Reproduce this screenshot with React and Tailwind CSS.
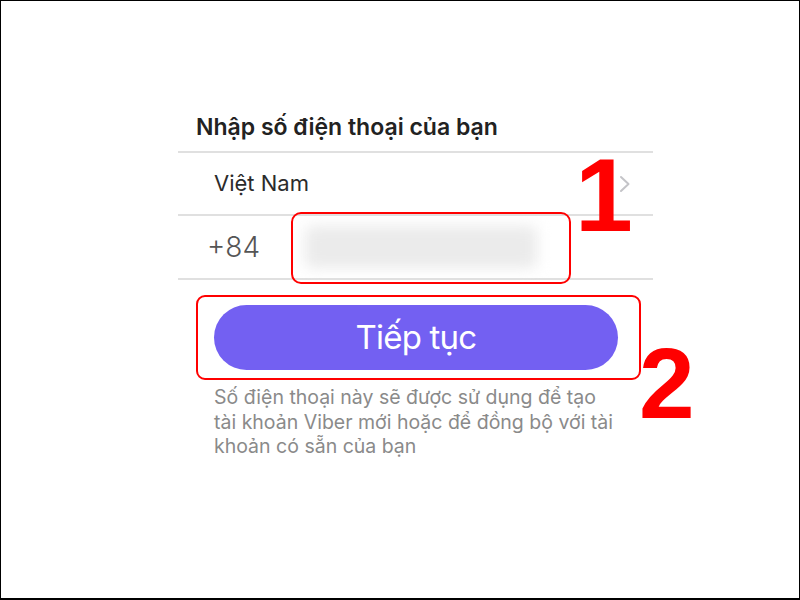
import React from 'react';

function Chevron() {
  return (
    <svg width="12" height="18" viewBox="0 0 12 18" fill="none">
      <path d="M2 2 L9.5 9 L2 16" stroke="#c4c4c8" strokeWidth="2" strokeLinecap="round" strokeLinejoin="round" />
    </svg>
  );
}

export default function App() {
  return (
    <div className="w-[800px] h-[600px] bg-white border border-black border-b-2 overflow-hidden" style={{ fontFamily: 'Inter, "Noto Sans", sans-serif' }}>
      <div className="relative ml-[177px] w-[475px] pt-[114px]">
        <div className="pl-[18px] pb-[11px] text-[23px] leading-[25px] font-semibold text-[#222] border-b-2 border-[#e0e0e0]">
          Nhập số điện thoại của bạn
        </div>

        <div className="h-[63px] flex items-center justify-between pl-[36px] pr-[22px] border-b-2 border-[#e0e0e0]">
          <span className="text-[22px] text-[#2b2b2b]">Việt Nam</span>
          <Chevron />
        </div>

        <div className="h-[64px] flex items-center pl-[29px] border-b-2 border-[#e0e0e0]">
          <span className="text-[28px] font-light text-[#555]">+84</span>
          <div className="ml-[45px] w-[232px] h-[42px] rounded-md bg-[#ebebeb] blur-[7px]" />
        </div>

        <div className="mt-[25px] ml-[36px] w-[404px] h-[65px] rounded-full bg-[#7360f2] flex items-center justify-center">
          <span className="text-[33px] font-normal text-white tracking-[-0.8px]">Tiếp tục</span>
        </div>

        <p className="mt-[15px] ml-[36px] w-[430px] text-[19.5px] leading-[24.5px] text-[#8a8a8a]">
          Số điện thoại này sẽ được sử dụng để tạo
          <br />
          tài khoản Viber mới hoặc để đồng bộ với tài
          <br />
          khoản có sẵn của bạn
        </p>

        {/* annotations */}
        <div className="absolute left-[113px] top-[211px] w-[280px] h-[72px] rounded-[10px] border-2 border-[#ff0000]" />
        <div className="absolute left-[18px] top-[294px] w-[445px] h-[85px] rounded-[9px] border-2 border-[#ff0000]" />
        <span className="absolute left-[397px] top-[142px] text-[104px] leading-none font-bold text-[#ff0000]" style={{ fontFamily: '"Liberation Sans", Arial, sans-serif' }}>1</span>
        <span className="absolute left-[461px] top-[332px] text-[100px] leading-none font-bold text-[#ff0000]" style={{ fontFamily: '"Liberation Sans", Arial, sans-serif' }}>2</span>
      </div>
    </div>
  );
}
